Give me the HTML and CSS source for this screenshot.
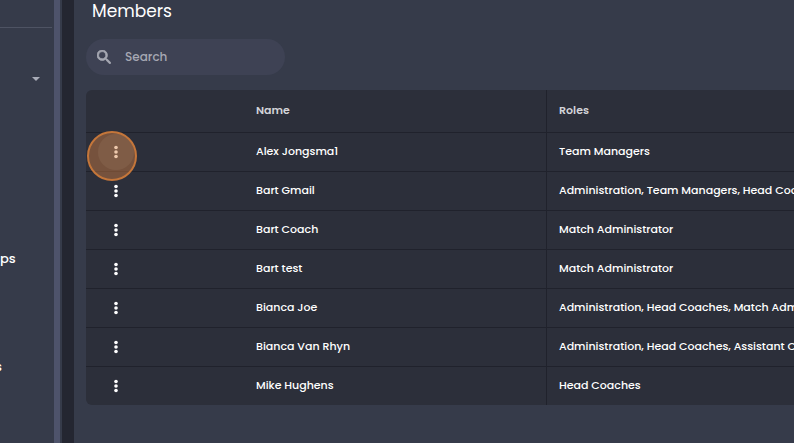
FILE: index.html
```
<!DOCTYPE html>
<html lang="en">
<head>
    <meta charset="UTF-8">
    <meta name="viewport" content="width=device-width, initial-scale=1.0">
    <title>Members</title>
    <link rel="stylesheet" href="styles.css">
</head>
<body>
    <svg class="symbols" aria-hidden="true">
        <symbol id="dots" viewBox="0 0 4 14">
            <circle cx="2" cy="2.5" r="1.8"/>
            <circle cx="2" cy="7" r="1.8"/>
            <circle cx="2" cy="11.5" r="1.8"/>
        </symbol>
    </svg>

    <div class="app">
        <aside class="sidebar">
            <div class="sidebar-top"></div>
            <nav class="menu">
                <button class="menu-toggle" aria-label="Expand">
                    <svg width="8" height="4" viewBox="0 0 8 4"><path d="M0 0h8L4 4z"/></svg>
                </button>
                <a class="menu-groups" href="#">ps</a>
                <a class="menu-last" href="#">s</a>
            </nav>
        </aside>

        <main class="content">
            <h1>Members</h1>
            <label class="search">
                <svg width="14" height="14" viewBox="3 3 17.5 17.5"><path d="M15.5 14h-.79l-.28-.27A6.47 6.47 0 0 0 16 9.5 6.5 6.5 0 1 0 9.5 16c1.61 0 3.09-.59 4.23-1.57l.27.28v.79l5 4.99L20.49 19l-4.99-5zm-6 0C7.01 14 5 11.99 5 9.5S7.01 5 9.5 5 14 7.01 14 9.5 11.99 14 9.5 14z"/></svg>
                <input type="text" placeholder="Search" aria-label="Search">
            </label>

            <table class="members">
                <thead>
                    <tr><th class="col-menu"></th><th class="col-name">Name</th><th>Roles</th></tr>
                </thead>
                <tbody>
                    <tr>
                        <td><button class="more active" aria-label="Options"><svg><use href="#dots"/></svg></button></td>
                        <td>Alex Jongsma1</td>
                        <td>Team Managers</td>
                    </tr>
                    <tr>
                        <td><button class="more" aria-label="Options"><svg><use href="#dots"/></svg></button></td>
                        <td>Bart Gmail</td>
                        <td>Administration, Team Managers, Head Coaches</td>
                    </tr>
                    <tr>
                        <td><button class="more" aria-label="Options"><svg><use href="#dots"/></svg></button></td>
                        <td>Bart Coach</td>
                        <td>Match Administrator</td>
                    </tr>
                    <tr>
                        <td><button class="more" aria-label="Options"><svg><use href="#dots"/></svg></button></td>
                        <td>Bart test</td>
                        <td>Match Administrator</td>
                    </tr>
                    <tr>
                        <td><button class="more" aria-label="Options"><svg><use href="#dots"/></svg></button></td>
                        <td>Bianca Joe</td>
                        <td>Administration, Head Coaches, Match Administrator</td>
                    </tr>
                    <tr>
                        <td><button class="more" aria-label="Options"><svg><use href="#dots"/></svg></button></td>
                        <td>Bianca Van Rhyn</td>
                        <td>Administration, Head Coaches, Assistant Coaches</td>
                    </tr>
                    <tr>
                        <td><button class="more" aria-label="Options"><svg><use href="#dots"/></svg></button></td>
                        <td>Mike Hughens</td>
                        <td>Head Coaches</td>
                    </tr>
                </tbody>
            </table>
        </main>
    </div>
</body>
</html>
```
FILE: styles.css
```
* {
    box-sizing: border-box;
}
body {
    margin: 0;
    background-color: #242631;
    color: #fff;
    font-family: Poppins, Inter, sans-serif;
    font-size: 11px;
    font-weight: 500;
}
button {
    padding: 0;
    border: 0;
    background: none;
    color: inherit;
    cursor: pointer;
}
svg {
    display: block;
    fill: currentColor;
}
.symbols {
    display: none;
}
.app {
    display: flex;
    gap: 12px;
    min-height: 100vh;
}

/* Sidebar, with its scrollbar track on the right */
.sidebar {
    flex: none;
    width: 62px;
    padding-right: 10px;
    background: linear-gradient(#4e536b, #4e536b) 54px 0 / 6px 100% no-repeat #363b4a;
}
.sidebar-top {
    height: 28px;
    margin-bottom: 33px;
    border-bottom: 1px solid #4e5363;
}
.menu {
    display: grid;
    grid-auto-rows: 36px;
    align-items: center;
    font-size: 13px;
}
.menu a {
    color: #fff;
    text-decoration: none;
}
.menu-toggle {
    grid-row: 1;
    justify-self: end;
    padding: 0 12px;
    color: #a9acb8;
}
.menu-groups {
    grid-row: 6;
}
/* only the tail of the label stays in view */
.menu-last {
    grid-row: 9;
    width: 2px;
    overflow: hidden;
    direction: rtl;
}

.content {
    flex: 1;
    min-width: 0;
    padding: 0 0 38px 12px;
    overflow: hidden;
    background-color: #363b4a;
}
h1 {
    margin: 0 0 16px 6px;
    font-size: 17px;
    font-weight: 400;
    line-height: 23px;
}
.search {
    display: flex;
    align-items: center;
    gap: 14px;
    width: 199px;
    height: 36px;
    margin-bottom: 15px;
    padding: 0 11px;
    border-radius: 18px;
    background-color: #3e4254;
    color: #a6a8b3;
}
.search svg {
    flex: none;
    stroke: currentColor;
    stroke-width: 1px;
}
.search input {
    flex: 1;
    min-width: 0;
    padding: 0;
    border: 0;
    outline: 0;
    background: none;
    color: #fff;
    font: inherit;
    font-size: 12px;
}
.search input::placeholder {
    color: #a6a8b3;
}

.members {
    width: 100%;
    table-layout: fixed;
    border-spacing: 0;
    border-radius: 6px 0 0 6px;
    background-color: #2c2f3a;
}
.members th,
.members td {
    height: 39px;
    padding: 0 12px 2px;
    border-bottom: 1px solid #20222c;
    text-align: left;
    white-space: nowrap;
}
.members th {
    height: 43px;
    color: #d2d3d8;
    font-weight: 600;
}
.members td:first-child {
    padding-bottom: 0;
}
.members th:nth-child(2),
.members td:nth-child(2) {
    border-right: 1px solid #20222c;
}
.members tr:last-child td {
    height: 38px;
    border-bottom: 0;
}
.col-menu {
    width: 158px;
}
.col-name {
    width: 303px;
}
.more {
    position: relative;
    display: flex;
    align-items: center;
    justify-content: center;
    width: 36px;
    height: 36px;
    border-radius: 50%;
}
.more svg {
    width: 4px;
    height: 14px;
}
/* Pressed row button, with the click marker over it */
.more.active {
    z-index: 1;
    background-color: #3d404b;
}
.more.active::after {
    content: "";
    position: absolute;
    top: -3px;
    left: -11px;
    width: 46px;
    height: 46px;
    border: 2px solid #c4763a;
    border-radius: 50%;
    background-color: rgba(215, 130, 65, 0.43);
}
```
